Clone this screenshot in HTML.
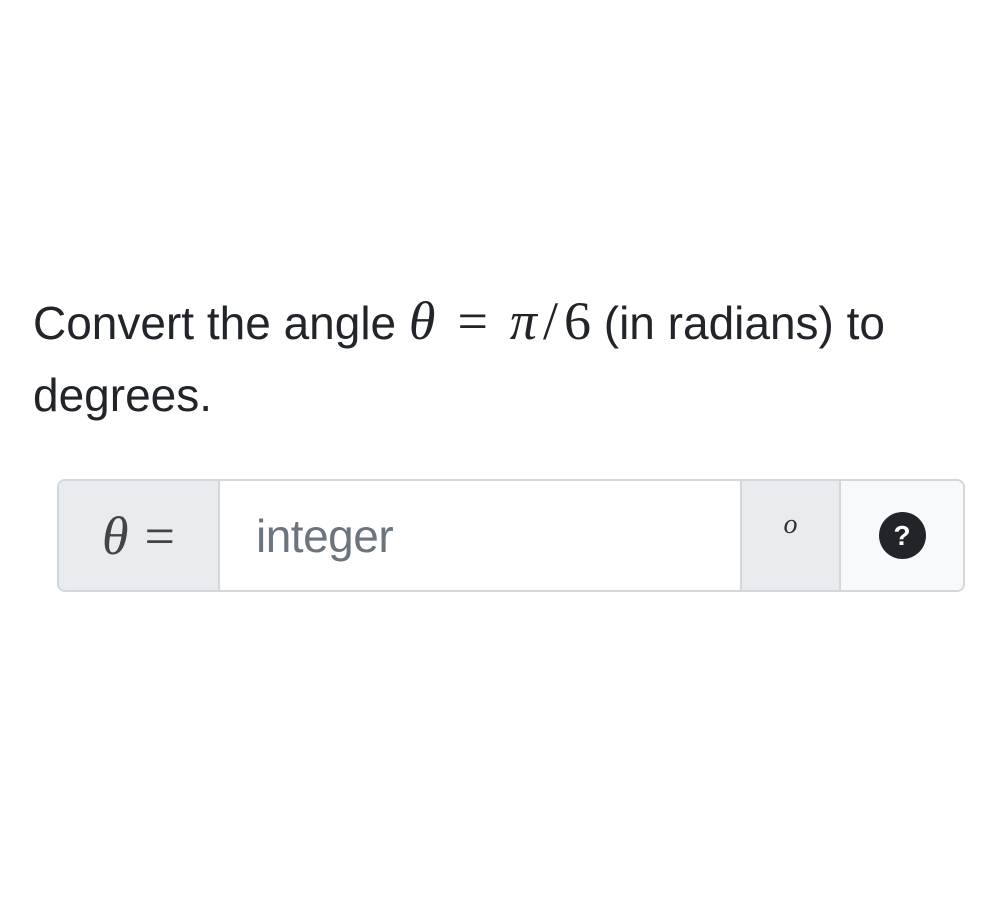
<!DOCTYPE html>
<html><head><style>
body{margin:0;width:1000px;height:900px;background:#fff;font-family:"Liberation Sans",sans-serif;color:#212529;}
.q{position:absolute;left:33px;top:285px;font-size:46px;line-height:72px;width:960px;letter-spacing:0}
.m{font-family:"Liberation Serif",serif;font-size:54px}
.sp{display:inline-block;width:22px}
.s2{display:inline-block;width:6px}
.s3{display:inline-block;width:16px}
.box{position:absolute;left:57px;top:479px;width:904px;height:109px;border:2px solid #d3d6db;border-radius:8px;overflow:hidden;display:flex}
.a{width:159px;background:#e9ecef;border-right:2px solid #d3d6db;display:flex;align-items:center;justify-content:center;font-family:"Liberation Serif",serif;font-size:54px;color:#444}
.b{flex:1;background:#fff;display:flex;align-items:center;padding-left:36px;font-size:46px;color:#6c757d;letter-spacing:-0.5px}
.c{width:101px;background:#e9ecef;border-left:2px solid #d3d6db;border-right:2px solid #d3d6db;text-align:center;font-family:"Liberation Serif",serif;font-style:italic;font-size:28px;padding-top:28px;box-sizing:border-box;color:#333}
.d{width:122px;background:#f8f9fa;display:flex;align-items:center;justify-content:center}
.h{width:47px;height:47px;border-radius:50%;background:#212529;color:#fff;font-weight:bold;font-size:28px;display:flex;align-items:center;justify-content:center}
</style></head><body>
<div class="q">Convert the angle <span class="m"><i>θ</i><span class="sp"></span>=<span class="sp"></span><i>π</i><span class="s2"></span>/<span class="s2"></span>6</span> (in radians) to<br>degrees.</div>
<div class="box">
<div class="a"><i>θ</i><span class="s3"></span>=</div>
<div class="b">integer</div>
<div class="c">o</div>
<div class="d"><div class="h">?</div></div>
</div>
</body></html>
